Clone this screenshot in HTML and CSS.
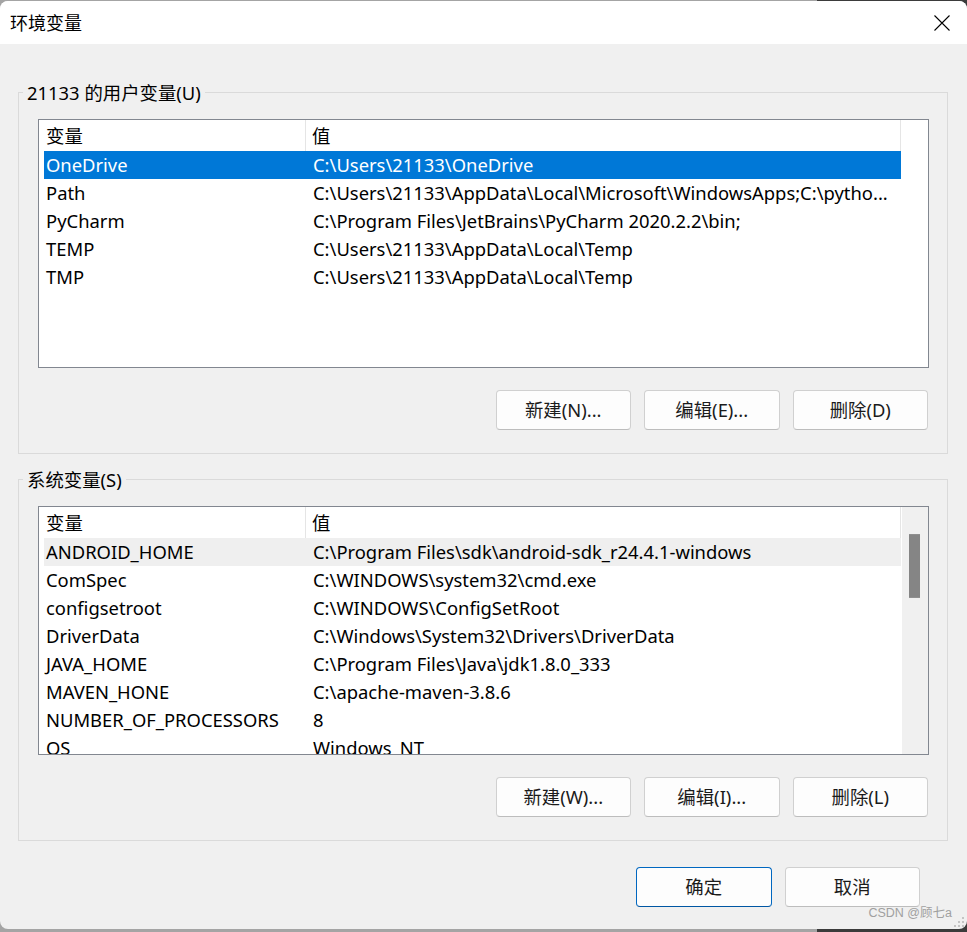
FILE: index.html
```html
<!DOCTYPE html>
<html lang="zh-CN">
<head>
<meta charset="utf-8">
<title>环境变量</title>
<link rel="stylesheet" href="styles.css">
</head>
<body>
<div class="window">
  <div class="titlebar">
    <span class="title">环境变量</span>
    <span class="close" aria-label="关闭">
      <svg width="16" height="16" viewBox="0 0 16 16"><path d="M0.5 0.5 L15.5 15.5 M15.5 0.5 L0.5 15.5" stroke="#000" stroke-width="1.1" fill="none"/></svg>
    </span>
  </div>
  <div class="body">
    <section class="group first">
      <div class="group-title">21133 的用户变量(U)</div>
      <div class="list">
        <div class="list-main">
          <div class="list-head">
            <div class="hcell c1">变量</div>
            <div class="hcell c2">值</div>
          </div>
          <div class="row selected"><span class="cell c1">OneDrive</span><span class="cell c2">C:\Users\21133\OneDrive</span></div>
          <div class="row"><span class="cell c1">Path</span><span class="cell c2">C:\Users\21133\AppData\Local\Microsoft\WindowsApps;C:\pytho...</span></div>
          <div class="row"><span class="cell c1">PyCharm</span><span class="cell c2">C:\Program Files\JetBrains\PyCharm 2020.2.2\bin;</span></div>
          <div class="row"><span class="cell c1">TEMP</span><span class="cell c2">C:\Users\21133\AppData\Local\Temp</span></div>
          <div class="row"><span class="cell c1">TMP</span><span class="cell c2">C:\Users\21133\AppData\Local\Temp</span></div>
        </div>
      </div>
      <div class="btn-row">
        <button class="btn">新建(N)...</button>
        <button class="btn">编辑(E)...</button>
        <button class="btn">删除(D)</button>
      </div>
    </section>

    <section class="group second">
      <div class="group-title">系统变量(S)</div>
      <div class="list">
        <div class="list-main">
          <div class="list-head">
            <div class="hcell c1">变量</div>
            <div class="hcell c2">值</div>
          </div>
          <div class="row hover"><span class="cell c1">ANDROID_HOME</span><span class="cell c2">C:\Program Files\sdk\android-sdk_r24.4.1-windows</span></div>
          <div class="row"><span class="cell c1">ComSpec</span><span class="cell c2">C:\WINDOWS\system32\cmd.exe</span></div>
          <div class="row"><span class="cell c1">configsetroot</span><span class="cell c2">C:\WINDOWS\ConfigSetRoot</span></div>
          <div class="row"><span class="cell c1">DriverData</span><span class="cell c2">C:\Windows\System32\Drivers\DriverData</span></div>
          <div class="row"><span class="cell c1">JAVA_HOME</span><span class="cell c2">C:\Program Files\Java\jdk1.8.0_333</span></div>
          <div class="row"><span class="cell c1">MAVEN_HONE</span><span class="cell c2">C:\apache-maven-3.8.6</span></div>
          <div class="row"><span class="cell c1">NUMBER_OF_PROCESSORS</span><span class="cell c2">8</span></div>
          <div class="row"><span class="cell c1">OS</span><span class="cell c2">Windows_NT</span></div>
        </div>
        <div class="scrollbar"><div class="thumb"></div></div>
      </div>
      <div class="btn-row">
        <button class="btn">新建(W)...</button>
        <button class="btn">编辑(I)...</button>
        <button class="btn">删除(L)</button>
      </div>
    </section>

    <div class="dialog-buttons">
      <button class="btn primary">确定</button>
      <button class="btn">取消</button>
    </div>
  </div>
  <div class="watermark">CSDN @顾七a</div>
  <svg class="grip" width="14" height="14" viewBox="0 0 14 14">
    <rect x="10" y="2" width="2" height="2" fill="#c4c4c4"/>
    <rect x="6" y="6" width="2" height="2" fill="#c4c4c4"/>
    <rect x="10" y="6" width="2" height="2" fill="#c4c4c4"/>
    <rect x="2" y="10" width="2" height="2" fill="#c4c4c4"/>
    <rect x="6" y="10" width="2" height="2" fill="#c4c4c4"/>
    <rect x="10" y="10" width="2" height="2" fill="#c4c4c4"/>
  </svg>
</div>
</body>
</html>
```

FILE: styles.css
```css
html, body {
  margin: 0;
  padding: 0;
}
body {
  width: 967px;
  height: 932px;
  overflow: hidden;
  background: linear-gradient(to right, #a4a4a4 0, #a4a4a4 817px, #3b3b3b 817px);
  font-family: "Noto Sans", "Noto Sans CJK SC", sans-serif;
  font-size: 18.4px;
  color: #000;
}
.window {
  position: relative;
  margin-top: 1px;
  height: 928px;
  background: #f0f0f0;
  border-radius: 8px;
  overflow: hidden;
}
.titlebar {
  height: 43px;
  background: #fff;
  display: flex;
  align-items: center;
  justify-content: space-between;
}
.title {
  padding-left: 10px;
  font-size: 18px;
  line-height: 24px;
}
.close {
  display: flex;
  width: 16px;
  height: 16px;
  margin-right: 17px;
}
.body {
  padding: 0 19px 0 18px;
}
.group {
  border: 1px solid #dadada;
  padding: 0 18px 23px 19px;
}
.group.first { margin-top: 48px; }
.group.second { margin-top: 25px; }
.group-title {
  width: fit-content;
  margin: -12px 0 0 -15px;
  padding: 0 4px;
  height: 24px;
  line-height: 24px;
  background: #f0f0f0;
  white-space: nowrap;
}
.list {
  margin-top: 14px;
  height: 247px;
  border: 1px solid #828790;
  background: #fff;
  display: flex;
  overflow: hidden;
}
.list-main {
  width: 863px;
  flex: none;
}
.list-head {
  display: flex;
  width: 861px;
  height: 31px;
  border-right: 1px solid #e5e5e5;
}
.hcell {
  line-height: 31px;
  padding-left: 7px;
  box-sizing: border-box;
}
.hcell.c1 {
  width: 267px;
  border-right: 1px solid #e5e5e5;
}
.hcell.c2 { flex: 1; padding-left: 6px; }
.row {
  display: flex;
  margin-left: 5px;
  width: 857px;
  height: 28px;
  line-height: 28px;
  white-space: nowrap;
}
.row.selected { background: #0078d7; color: #fff; }
.row.hover { background: #efefef; }
.cell { overflow: hidden; box-sizing: border-box; }
.cell.c1 { width: 262px; padding-left: 2px; flex: none; }
.cell.c2 { flex: 1; padding-left: 7px; }
.scrollbar {
  width: 26px;
  flex: none;
  margin-left: auto;
  background: #f0f0f0;
}
.thumb {
  width: 11px;
  height: 64px;
  margin: 27px 0 0 7px;
  background: #858585;
  border-top: 1px solid #8f8f8f;
  border-bottom: 1px solid #8f8f8f;
  box-sizing: border-box;
}
.btn-row {
  display: flex;
  justify-content: flex-end;
  gap: 13px;
  margin-top: 22px;
  padding-right: 1px;
}
.btn {
  width: 135.5px;
  height: 40px;
  box-sizing: border-box;
  background: #fdfdfd;
  border: 1px solid #d0d0d0;
  border-bottom-color: #bdbdbd;
  border-radius: 4px;
  font-family: "Noto Sans", "Noto Sans CJK SC", sans-serif;
  font-size: 18.4px;
  color: #1b1b1b;
  padding: 0;
  line-height: 36px;
}
.btn.primary {
  border: 1px solid #0067c0;
  border-bottom-color: #0056a3;
}
.dialog-buttons {
  display: flex;
  justify-content: flex-end;
  gap: 13px;
  margin-top: 26px;
  padding-right: 28px;
}
.watermark {
  position: absolute;
  right: 15px;
  bottom: 8px;
  font-size: 12.5px;
  color: #a0a0a0;
  font-family: "Liberation Sans", "Noto Sans CJK SC", sans-serif;
}
.grip {
  position: absolute;
  right: 1px;
  bottom: 0;
}
```
